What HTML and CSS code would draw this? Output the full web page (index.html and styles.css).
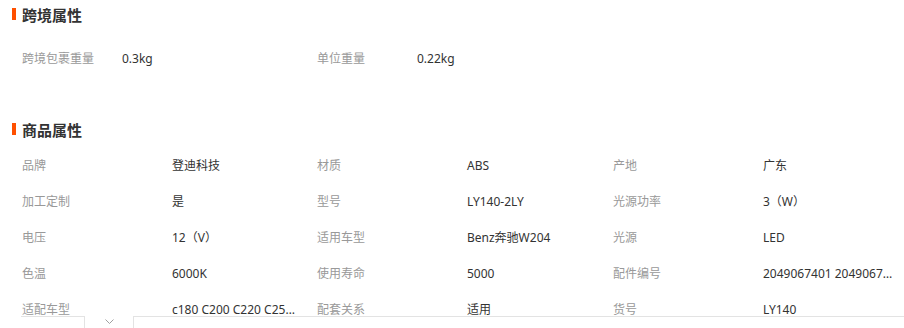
FILE: index.html
```
<!DOCTYPE html>
<html lang="zh-CN">
<head>
<meta charset="utf-8">
<link rel="stylesheet" href="styles.css">
</head>
<body>
<div class="page">
  <h2 class="title">跨境属性</h2>
  <div class="cross">
    <span class="lbl">跨境包裹重量</span><span class="val">0.3kg</span>
    <span class="lbl">单位重量</span><span class="val">0.22kg</span>
  </div>
  <h2 class="title title2">商品属性</h2>
  <div class="grid">
    <span class="lbl">品牌</span><span class="val">登迪科技</span>
    <span class="lbl">材质</span><span class="val">ABS</span>
    <span class="lbl">产地</span><span class="val">广东</span>

    <span class="lbl">加工定制</span><span class="val">是</span>
    <span class="lbl">型号</span><span class="val">LY140-2LY</span>
    <span class="lbl">光源功率</span><span class="val">3（W）</span>

    <span class="lbl">电压</span><span class="val">12（V）</span>
    <span class="lbl">适用车型</span><span class="val">Benz奔驰W204</span>
    <span class="lbl">光源</span><span class="val">LED</span>

    <span class="lbl">色温</span><span class="val">6000K</span>
    <span class="lbl">使用寿命</span><span class="val">5000</span>
    <span class="lbl">配件编号</span><span class="val"><span class="trunc trunc-wide">2049067401 2049067402 2049067403</span></span>

    <span class="lbl">适配车型</span><span class="val"><span class="trunc">c180 C200 C220 C250 C260 C300</span></span>
    <span class="lbl">配套关系</span><span class="val">适用</span>
    <span class="lbl">货号</span><span class="val">LY140</span>
  </div>
  <div class="fold">
    <div class="tab">
      <svg width="9" height="5" viewBox="0 0 9 5"><path d="M0.5 0.5 L4.5 4.5 L8.5 0.5" fill="none" stroke="#a0a0a0" stroke-width="1"/></svg>
    </div>
  </div>
</div>
</body>
</html>
```
FILE: styles.css
```
html, body {
  margin: 0;
  padding: 0;
  background: #fff;
}
body {
  font-family: "Noto Sans", "Noto Sans CJK SC", sans-serif;
  font-size: 12px;
  color: #333;
  width: 904px;
  height: 328px;
  overflow: hidden;
}
.page {
  position: relative;
  height: 328px;
}
.title {
  position: relative;
  margin: 0;
  height: 30px;
  line-height: 30px;
  padding-left: 22px;
  font-size: 15px;
  font-weight: bold;
  color: #333;
}
.title::before {
  content: "";
  position: absolute;
  left: 12px;
  top: 8px;
  width: 4px;
  height: 12px;
  background: #ff5000;
}
.title2 {
  margin-top: 38px;
}
.cross {
  display: grid;
  grid-template-columns: 100px 195px 100px 1fr;
  padding-left: 22px;
  margin-top: 11px;
  height: 36px;
  line-height: 36px;
}
.grid {
  display: grid;
  grid-template-columns: 150px 145px 150px 146px 150px 1fr;
  grid-auto-rows: 36px;
  padding-left: 22px;
  margin-top: 3px;
  line-height: 36px;
}
.lbl {
  color: #999;
  white-space: nowrap;
}
.val {
  color: #333;
  white-space: nowrap;
}
.trunc {
  display: inline-block;
  max-width: 128px;
  overflow: hidden;
  text-overflow: ellipsis;
  vertical-align: top;
}
.trunc-wide {
  max-width: 136px;
}
.fold {
  position: absolute;
  left: 21px;
  right: 0;
  top: 316px;
  height: 12px;
  border-top: 1px solid #e3e3e3;
  background: #fff;
}
.tab {
  position: absolute;
  left: 63px;
  top: -1px;
  width: 50px;
  height: 13px;
  background: #fff;
  border-left: 1px solid #e3e3e3;
  border-right: 1px solid #e3e3e3;
  display: flex;
  justify-content: center;
  padding-top: 3px;
  box-sizing: border-box;
}
.tab svg {
  display: block;
}
```
